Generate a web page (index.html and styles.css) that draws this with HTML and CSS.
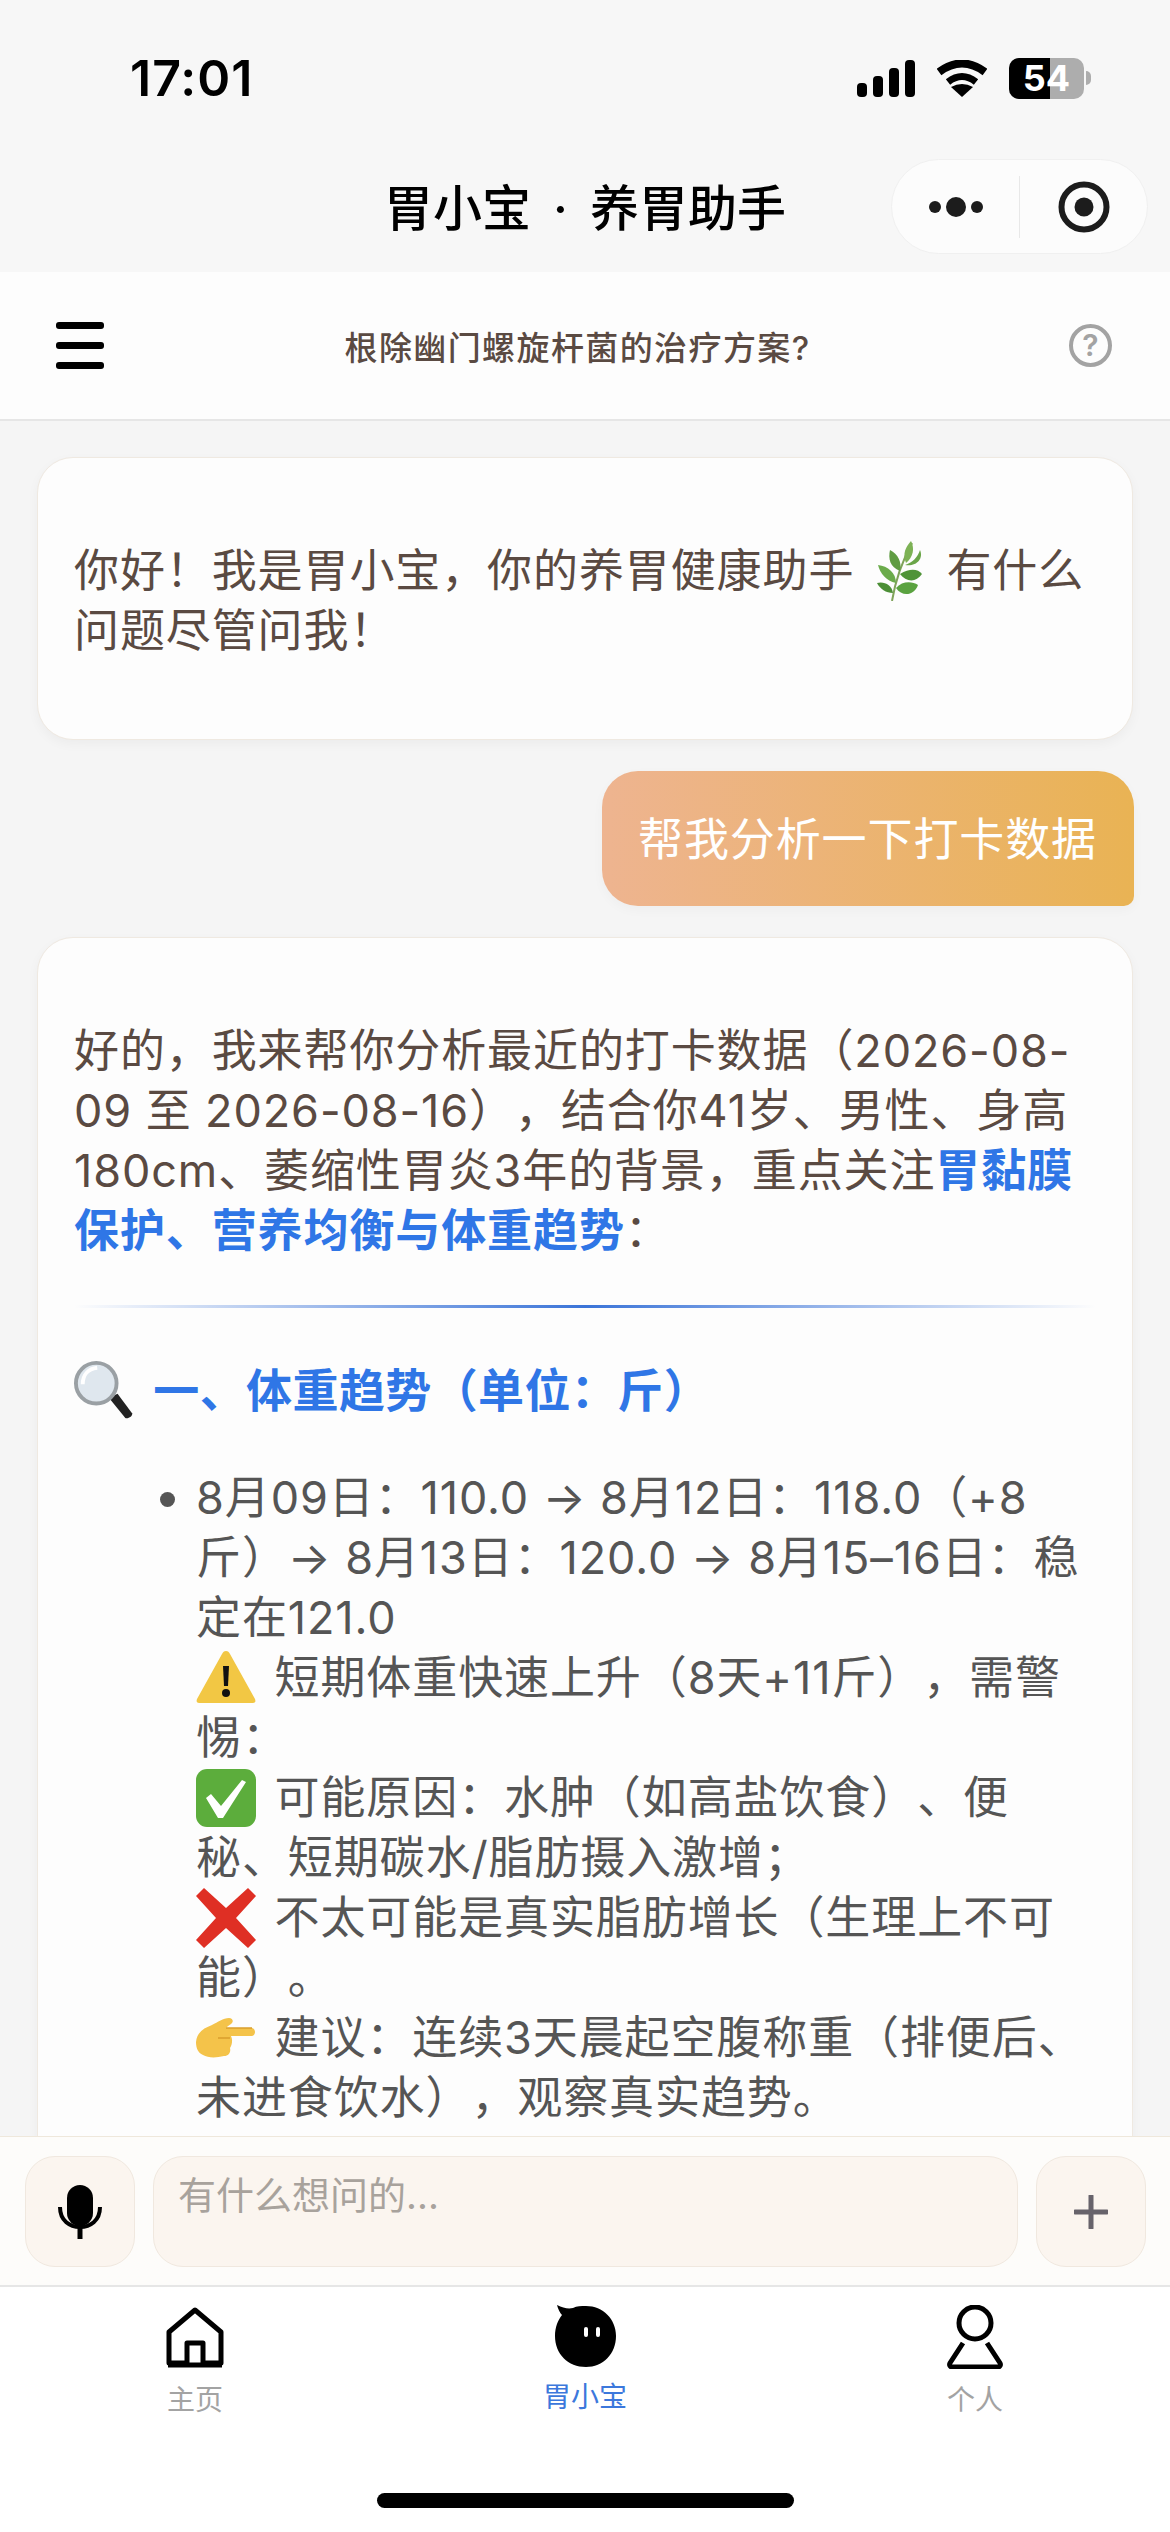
FILE: index.html
```html
<!DOCTYPE html>
<html lang="zh">
<head>
    <meta charset="utf-8">
    <title>胃小宝</title>
    <link rel="stylesheet" href="styles.css">
</head>
<body>
<div class="page">
    <div class="top">
        <div class="status-bar">
            <span class="time">17:01</span>
            <div class="status-icons">
                <svg class="signal" viewBox="0 0 58 37"><rect x="0" y="23" width="10" height="14" rx="4"/><rect x="16" y="16" width="10" height="21" rx="4"/><rect x="32" y="8" width="10" height="29" rx="4"/><rect x="48" y="0" width="10" height="37" rx="4"/></svg>
                <svg class="wifi" viewBox="0 0 50 37"><path d="M2 12 Q25 -5 48 12" fill="none" stroke="#000" stroke-width="8"/><path d="M11 22 Q25 11 39 22" fill="none" stroke="#000" stroke-width="7"/><path d="M14 27 Q25 21 36 27 L25 37 Z"/></svg>
                <div class="battery">
                    <div class="battery-body"><span class="battery-level"></span><span class="battery-text">54</span></div>
                    <span class="battery-cap"></span>
                </div>
            </div>
        </div>
        <div class="nav-bar">
            <span></span>
            <h1 class="nav-title">胃小宝 · 养胃助手</h1>
            <div class="capsule">
                <div class="capsule-btn">
                    <svg width="56" height="24" viewBox="0 0 56 24" fill="#1c1c1c"><circle cx="7" cy="12" r="6"/><circle cx="28" cy="12" r="10"/><circle cx="49" cy="12" r="6"/></svg>
                </div>
                <span class="capsule-line"></span>
                <div class="capsule-btn">
                    <svg width="52" height="52" viewBox="0 0 52 52"><circle cx="26" cy="26" r="22.5" fill="none" stroke="#1c1c1c" stroke-width="6"/><circle cx="26" cy="26" r="9.5" fill="#1c1c1c"/></svg>
                </div>
            </div>
        </div>
    </div>

    <div class="sub-header">
        <div class="menu-icon"><span></span><span></span><span></span></div>
        <div class="sub-title">根除幽门螺旋杆菌的治疗方案?</div>
        <div class="help-icon">?</div>
    </div>

    <div class="chat">
        <div class="bubble bot">
            <p>你好&#xFF01;我是胃小宝&#xFF0C;你的养胃健康助手
                <svg class="emoji" viewBox="0 0 60 60"><path d="M24 60 C27 42 32 24 44 2" fill="none" stroke="#7fa35a" stroke-width="2"/><path d="M38 22 C34 12 38 6 43 0 C47 8 45 16 38 22Z" fill="#7db255"/><path d="M37 24 C44 22 50 16 52 9 C56 18 48 26 37 24Z" fill="#6aa548"/><path d="M32 30 C22 26 20 18 22 9 C30 13 34 21 32 30Z" fill="#5f9c42"/><path d="M32 33 C42 27 50 28 54 33 C48 42 38 41 32 33Z" fill="#4f9338"/><path d="M28 42 C18 40 12 32 10 24 C20 25 28 32 28 42Z" fill="#6bab4b"/><path d="M28 47 C34 40 44 40 50 44 C46 55 34 56 28 47Z" fill="#5aa240"/><path d="M25 52 C18 52 12 48 9 42 C16 40 24 44 25 52Z" fill="#4c8f36"/></svg>
                有什么问题尽管问我&#xFF01;</p>
        </div>

        <div class="bubble user">帮我分析一下打卡数据</div>

        <div class="bubble bot">
            <p>好的&#xFF0C;我来帮你分析最近的打卡数据&#xFF08;2026-08-09 至 2026-08-16&#xFF09;&#xFF0C;结合你41岁、男性、身高180cm、萎缩性胃炎3年的背景&#xFF0C;重点关注<strong>胃黏膜保护、营养均衡与体重趋势</strong>&#xFF1A;</p>
            <div class="divider"></div>
            <h2 class="section-title">
                <svg class="emoji" viewBox="0 0 62 60"><path d="M36 38 L45 34 L60 54 C61 57 56 60 53 59Z" fill="#222"/><circle cx="23" cy="23" r="21" fill="#dfe7ee" stroke="#9aa0a4" stroke-width="4"/><path d="M9 24 C9 14 15 8 24 7" fill="none" stroke="#fff" stroke-width="4"/></svg>
                一、体重趋势&#xFF08;单位&#xFF1A;斤&#xFF09;</h2>
            <ul class="notes">
                <li>8月09日&#xFF1A;110.0 → 8月12日&#xFF1A;118.0&#xFF08;+8斤&#xFF09;→ 8月13日&#xFF1A;120.0 → 8月15–16日&#xFF1A;稳定在121.0<br>
                    <svg class="emoji" viewBox="0 0 60 60"><path d="M30 3 C32 3 33 4 34 6 L59 51 C60 54 59 55 56 55 L4 55 C1 55 0 54 1 51 L26 6 C27 4 28 3 30 3Z" fill="#f2c744"/><path d="M27 18 H33 L32 38 H28Z" fill="#111"/><circle cx="30" cy="45" r="4" fill="#111"/></svg>
                    短期体重快速上升&#xFF08;8天+11斤&#xFF09;&#xFF0C;需警惕&#xFF1A;<br>
                    <svg class="emoji" viewBox="0 0 60 60"><rect x="0" y="1" width="60" height="58" rx="11" fill="#5cad3c"/><path d="M10 30 L15 26 L25 38 L46 12 L50 14 L27 50 L22 50Z" fill="#fff"/></svg>
                    可能原因&#xFF1A;水肿&#xFF08;如高盐饮食&#xFF09;、便秘、短期碳水/脂肪摄入激增&#xFF1B;<br>
                    <svg class="emoji" viewBox="0 0 60 60"><path d="M8 0 L30 20 L52 0 L60 8 L40 30 L60 52 L52 60 L30 40 L8 60 L0 52 L20 30 L0 8Z" fill="#df2f24"/></svg>
                    不太可能是真实脂肪增长&#xFF08;生理上不可能&#xFF09;。<br>
                    <svg class="emoji" viewBox="0 0 60 60"><path d="M0 34 C1 24 8 20 16 17 C22 14 27 10 33 10 C37 10 38 14 35 16 C33 17 31 19 30 20 L56 20 C60 21 60 27 56 28 L35 28 C37 32 36 37 34 40 C35 44 33 48 28 48 C20 50 12 50 7 47 C2 45 0 40 0 34Z" fill="#f4c34a"/><path d="M22 30 H34 M30 20 H56" fill="none" stroke="#d99f2c" stroke-width="1.5"/></svg>
                    建议&#xFF1A;连续3天晨起空腹称重&#xFF08;排便后、未进食饮水&#xFF09;&#xFF0C;观察真实趋势。
                </li>
            </ul>
        </div>
    </div>

    <div class="input-bar">
        <div class="side-btn">
            <svg width="44" height="54" viewBox="0 0 44 54"><rect x="9" y="0" width="26" height="41" rx="13"/><path d="M2 22 C2 36 12 42 22 42 C32 42 42 36 42 22" fill="none" stroke="#000" stroke-width="4"/><path d="M22 41 V54" stroke="#000" stroke-width="5"/></svg>
        </div>
        <div class="input-box">有什么想问的...</div>
        <div class="side-btn">
            <svg width="34" height="34" viewBox="0 0 34 34"><path d="M17 1 V33 M1 17 H33" stroke="#67636b" stroke-width="5" stroke-linecap="round"/></svg>
        </div>
    </div>

    <div class="tab-bar">
        <div class="tabs">
            <div class="tab">
                <svg class="tab-icon" width="60" height="64" viewBox="0 0 60 64"><path d="M30 5 L56 27 V58 H38 V38 H22 V58 H4 V27 Z" fill="none" stroke="#000" stroke-width="5" stroke-linejoin="round"/><path d="M3 60 H57" stroke="#000" stroke-width="5"/></svg>
                <span>主页</span>
            </div>
            <div class="tab active">
                <svg class="tab-icon" width="64" height="64" viewBox="0 0 64 64"><path d="M4 0 C10 3 15 4 20 3 C24 1 28 1 33 1 C50 1 63 14 63 31 C63 49 50 62 33 62 C15 62 2 49 2 31 C2 22 5 15 9 10 C7 8 5 4 4 0Z"/><rect x="31" y="22" width="4" height="10" rx="2" fill="#fff"/><rect x="43" y="22" width="4" height="10" rx="2" fill="#fff"/></svg>
                <span>胃小宝</span>
            </div>
            <div class="tab">
                <svg class="tab-icon" width="60" height="64" viewBox="0 0 60 64"><circle cx="30" cy="18" r="16" fill="none" stroke="#000" stroke-width="5"/><path d="M18 38 L5 58 C4 60 5 62 7 62 H53 C55 62 56 60 55 58 L42 38" fill="none" stroke="#000" stroke-width="5" stroke-linejoin="round"/></svg>
                <span>个人</span>
            </div>
        </div>
        <div class="home-bar"></div>
    </div>
</div>
</body>
</html>
```

FILE: styles.css
```css
* {
    margin: 0;
    padding: 0;
    box-sizing: border-box;
    font-family: Inter, "Noto Sans CJK SC", sans-serif;
}

body {
    width: 1170px;
    height: 2532px;
    overflow: hidden;
    background: #f5f5f5;
}

.page {
    display: flex;
    flex-direction: column;
    height: 2532px;
}

/* Status bar + mini program nav */
.top {
    background: #f7f7f7;
}

.status-bar {
    display: flex;
    align-items: center;
    justify-content: space-between;
    height: 156px;
    padding: 0 79px 0 130px;
}

.time {
    font-size: 50px;
    font-weight: 600;
    letter-spacing: 1px;
    color: #000;
}

.status-icons {
    display: flex;
    align-items: center;
    gap: 22px;
}

.signal {
    width: 58px;
    height: 37px;
}

.wifi {
    width: 50px;
    height: 37px;
}

.battery {
    display: flex;
    align-items: center;
    gap: 2px;
}

.battery-body {
    position: relative;
    display: flex;
    align-items: center;
    justify-content: center;
    width: 75px;
    height: 41px;
    border-radius: 10px;
    background: #adadad;
    overflow: hidden;
}

.battery-level {
    position: absolute;
    top: 0;
    bottom: 0;
    left: 0;
    width: 41px;
    background: #000;
}

.battery-text {
    position: relative;
    font-size: 36px;
    font-weight: 700;
    color: #fff;
}

.battery-cap {
    width: 5px;
    height: 14px;
    border-radius: 0 7px 7px 0;
    background: #adadad;
}

.nav-bar {
    display: grid;
    grid-template-columns: 1fr auto 1fr;
    height: 116px;
    padding: 3px 22px 0;
}

.nav-title {
    font-size: 49px;
    font-weight: 500;
    line-height: 100px;
    word-spacing: 9px;
    color: #000;
}

.capsule {
    display: flex;
    align-items: center;
    justify-self: end;
    width: 257px;
    height: 95px;
    background: #fcfcfc;
    border: 1px solid #f0f0f0;
    border-radius: 48px;
}

.capsule-btn {
    display: flex;
    align-items: center;
    justify-content: center;
    flex: 1;
}

.capsule-line {
    width: 1px;
    height: 62px;
    background: #e8e8e8;
}

/* Question header */
.sub-header {
    display: flex;
    align-items: center;
    height: 149px;
    padding: 0 58px 0 56px;
    background: #fdfdfd;
    border-bottom: 2px solid #e6e6e6;
}

.menu-icon {
    display: flex;
    flex-direction: column;
    gap: 13px;
    width: 48px;
}

.menu-icon span {
    height: 7px;
    border-radius: 3px;
    background: #000;
}

.sub-title {
    flex: 1;
    padding-right: 18px;
    font-size: 33px;
    font-weight: 500;
    letter-spacing: 1.4px;
    text-align: center;
    color: #5a4a42;
}

.help-icon {
    width: 43px;
    height: 43px;
    border: 4px solid #a3a3a3;
    border-radius: 50%;
    font-size: 30px;
    font-weight: 600;
    line-height: 35px;
    text-align: center;
    color: #a3a3a3;
}

/* Chat list */
.chat {
    flex: 1;
    min-height: 0;
    overflow: hidden;
    padding: 36px 36px 0 37px;
}

.bubble {
    font-size: 45px;
    line-height: 60px;
    letter-spacing: 0.9px;
    text-spacing-trim: space-all;
}

.bubble.bot {
    width: 1096px;
    padding: 83px 36px 78px;
    margin-bottom: 31px;
    background: #fdfdfd;
    border: 1px solid #efe9e1;
    border-radius: 36px;
    box-shadow: 0 4px 12px rgba(0, 0, 0, 0.04);
    color: #5a4a42;
}

.bubble.user {
    width: 532px;
    margin: 0 0 31px auto;
    padding: 39px 36px 36px;
    background: linear-gradient(90deg, #eeb490, #e9b354);
    border-radius: 36px 36px 10px 36px;
    box-shadow: 0 4px 12px rgba(0, 0, 0, 0.03);
    color: #fff;
    white-space: nowrap;
}

.emoji {
    width: 60px;
    height: 60px;
    margin-right: 5px;
    vertical-align: top;
}

strong {
    font-weight: 700;
    color: #2f76e6;
}

.divider {
    height: 3px;
    margin: 44px 0 52px;
    background: linear-gradient(90deg, transparent, #3b74d8, transparent);
}

.section-title {
    font-size: 46px;
    font-weight: 700;
    line-height: 60px;
    letter-spacing: 0.4px;
    color: #2f76e6;
}

.section-title .emoji {
    margin-right: 8px;
}

.notes {
    margin-top: 48px;
    padding-left: 122px;
    color: #555;
}

.notes li {
    width: 895px;
}

.notes li::marker {
    color: #555;
}

/* Input row */
.input-bar {
    display: flex;
    gap: 18px;
    height: 151px;
    padding: 19px 24px 18px 25px;
    background: #fdfcfa;
    border-top: 1px solid #efe8dc;
    border-bottom: 2px solid #e6e6e6;
}

.side-btn {
    display: flex;
    align-items: center;
    justify-content: center;
    width: 110px;
    background: #fbf5ef;
    border: 1px solid #f0e8df;
    border-radius: 30px;
}

.input-box {
    flex: 1;
    padding: 8px 24px;
    background: #fbf5ef;
    border: 1px solid #f0e8df;
    border-radius: 30px;
    font-size: 38px;
    line-height: 60px;
    color: #a8a29c;
}

/* Tabs */
.tab-bar {
    flex-shrink: 0;
    height: 245px;
    background: #fff;
}

.tabs {
    display: grid;
    grid-template-columns: repeat(3, 390px);
    padding-top: 18px;
}

.tab {
    display: flex;
    flex-direction: column;
    align-items: center;
    gap: 11px;
    font-size: 28px;
    line-height: 40px;
    color: #a3a3a3;
}

.tab.active {
    gap: 8px;
    color: #3c78dc;
}

.tab-icon {
    display: block;
}

.home-bar {
    width: 417px;
    height: 15px;
    margin: 73px auto 0;
    border-radius: 8px;
    background: #000;
}
```
